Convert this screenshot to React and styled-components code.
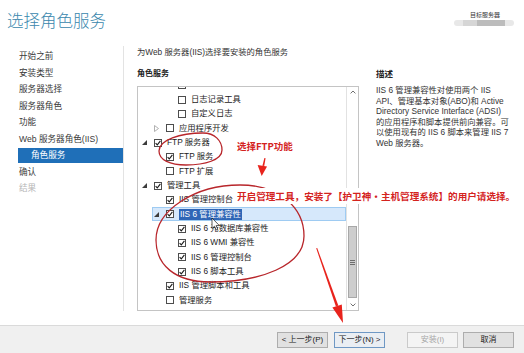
import React from 'react'
import styled, { createGlobalStyle } from 'styled-components'

const LATIN = `"Liberation Sans", "Noto Sans CJK SC", sans-serif`
const CJK = `"Noto Sans CJK SC", "Liberation Sans", sans-serif`

const GlobalStyle = createGlobalStyle`
    html, body { margin: 0; padding: 0; background: #fff; }
    body { font-family: ${LATIN}; }
`

const navItems = [
    { label: '开始之前' },
    { label: '安装类型' },
    { label: '服务器选择' },
    { label: '服务器角色' },
    { label: '功能' },
    { label: 'Web 服务器角色(IIS)' },
    { label: '角色服务', active: true },
    { label: '确认' },
    { label: '结果', muted: true },
]

const treeRows = [
    { level: 2, label: '' },
    { level: 2, label: '日志记录工具' },
    { level: 2, label: '自定义日志' },
    { level: 1, label: '应用程序开发', expander: 'closed' },
    { level: 0, label: 'FTP 服务器', expander: 'open', checked: true },
    { level: 1, label: 'FTP 服务', checked: true },
    { level: 1, label: 'FTP 扩展' },
    { level: 0, label: '管理工具', expander: 'open', checked: true },
    { level: 1, label: 'IIS 管理控制台', checked: true },
    { level: 1, label: 'IIS 6 管理兼容性', expander: 'open', checked: true, selected: true },
    { level: 2, label: 'IIS 6 元数据库兼容性', checked: true },
    { level: 2, label: 'IIS 6 WMI 兼容性', checked: true },
    { level: 2, label: 'IIS 6 管理控制台', checked: true },
    { level: 2, label: 'IIS 6 脚本工具', checked: true },
    { level: 1, label: 'IIS 管理脚本和工具', checked: true },
    { level: 1, label: '管理服务' },
]

const descLines = [
    'IIS 6 管理兼容性对使用两个 IIS',
    'API、管理基本对象(ABO)和 Active',
    'Directory Service Interface (ADSI)',
    '的应用程序和脚本提供前向兼容。可',
    '以使用现有的 IIS 6 脚本来管理 IIS 7',
    'Web 服务器。',
]

function Expander({ kind }) {
    if (kind === 'open') {
        return (
            <svg width="5" height="5" viewBox="0 0 5 5">
                <polygon points="5,0 5,5 0,5" fill="#3c3c3c" />
            </svg>
        )
    }
    if (kind === 'closed') {
        return (
            <svg width="5" height="7" viewBox="0 0 5 7">
                <polygon points="0.5,0.5 4.5,3.5 0.5,6.5" fill="none" stroke="#a8a8a8" strokeWidth="0.9" />
            </svg>
        )
    }
    return null
}

function Chevron({ up }) {
    return (
        <svg width="6" height="4" viewBox="0 0 6 4">
            <path d={up ? 'M0.6 3.4 L3 1 L5.4 3.4' : 'M0.6 0.6 L3 3 L5.4 0.6'} fill="none" stroke="#606060" strokeWidth="0.9" />
        </svg>
    )
}

export default function App() {
    return (
        <Window>
            <GlobalStyle />
            <Header>
                <Title>选择角色服务</Title>
                <Target>
                    <TargetLabel>目标服务器</TargetLabel>
                    <TargetBar>
                        <TargetChunk $w={14} $c="#d6d6d6" />
                        <TargetChunk $w={28} $c="#bcbcbc" />
                    </TargetBar>
                </Target>
            </Header>

            <Body>
                <Nav>
                    {navItems.map((item) => (
                        <NavItem key={item.label} $active={item.active} $muted={item.muted}>
                            {item.label}
                        </NavItem>
                    ))}
                </Nav>

                <Content>
                    <Subtitle>为Web 服务器(IIS)选择要安装的角色服务</Subtitle>
                    <Columns>
                        <Column>
                            <SectionTitle>角色服务</SectionTitle>
                            <TreeBox>
                                <TreeList>
                                    {treeRows.map((row, i) => (
                                        <TreeRow key={i} $level={row.level} $selected={row.selected}>
                                            <ExpanderSlot>
                                                <Expander kind={row.expander} />
                                            </ExpanderSlot>
                                            <Check>
                                                {row.checked && (
                                                    <svg width="6" height="6" viewBox="0 0 6 6">
                                                        <path d="M0.6 3.1 L2.3 4.9 L5.4 0.9" fill="none" stroke="#1c1c1c" strokeWidth="1.1" />
                                                    </svg>
                                                )}
                                            </Check>
                                            <RowLabel $selected={row.selected}>{row.label}</RowLabel>
                                        </TreeRow>
                                    ))}
                                </TreeList>
                                <ScrollBar>
                                    <ScrollButton><Chevron up /></ScrollButton>
                                    <Thumb>
                                        <Grip />
                                        <Grip />
                                        <Grip />
                                    </Thumb>
                                    <ScrollButton><Chevron /></ScrollButton>
                                </ScrollBar>
                            </TreeBox>
                        </Column>
                        <Column>
                            <SectionTitle $size={8.5}>描述</SectionTitle>
                            <Description>
                                {descLines.map((line) => (
                                    <DescLine key={line}>{line}</DescLine>
                                ))}
                            </Description>
                        </Column>
                    </Columns>
                </Content>
            </Body>

            <Footer>
                <Button>&lt; 上一步(P)</Button>
                <Button $primary $gap={6}>下一步(N) &gt;</Button>
                <Button disabled $gap={22}>安装(I)</Button>
                <Button $gap={5}>取消</Button>
            </Footer>

            <Overlay width="524" height="353" viewBox="0 0 524 353">
                <path
                    d="M159 151 C159 140 180 133 203 133 C215 133 222 141 222 150 C222 160 205 165 186 165 C170 165 159 160 159 151 Z"
                    fill="none"
                    stroke="#b8262b"
                    strokeWidth="1.3"
                />
                <path
                    d="M240 185 C280 185 304 208 304 236 C304 266 260 282 210 282 C175 282 156 265 156 240 C156 210 195 185 240 185 Z"
                    fill="none"
                    stroke="#b8262b"
                    strokeWidth="1.3"
                />
                <polygon points="264.4,158 265.6,158.2 264.2,166 262.4,165.8" fill="#e8231c" />
                <polygon points="257.6,165 267,166.6 261.7,176" fill="#e8231c" />
                <polygon points="316.2,248.3 317.2,248 338.3,305.6 335.9,306.4" fill="#e8231c" />
                <polygon points="341.8,304.4 332.4,307.6 343,323" fill="#e8231c" />
                <path
                    d="M212 218 L212 228.5 L214.5 226.2 L216.3 230 L217.9 229.3 L216.1 225.6 L219.4 225.6 Z"
                    fill="#fff"
                    stroke="#111"
                    strokeWidth="0.7"
                />
            </Overlay>
            <Note $top={140} $left={237} $size={9.5}>选择FTP功能</Note>
            <Note $top={188} $left={234} $size={9.6} $boxed>开启管理工具，安装了【护卫神•主机管理系统】的用户请选择。</Note>
        </Window>
    )
}

const Window = styled.div`
    position: relative;
    width: 524px;
    height: 353px;
    overflow: hidden;
    display: flex;
    flex-direction: column;
    background: #fff;
    font-family: ${LATIN};
    color: #333;
`

const Header = styled.header`
    height: 46px;
    flex: none;
    display: flex;
    justify-content: space-between;
    align-items: flex-start;
    padding: 0 10px 0 7px;
    box-sizing: border-box;
`

const Title = styled.h1`
    margin: 10px 0 0;
    font-family: ${CJK};
    font-weight: 300;
    font-size: 16.5px;
    line-height: 20px;
    color: #3a87ad;
`

const Target = styled.div`
    display: flex;
    flex-direction: column;
    align-items: flex-end;
    margin-top: 11px;
`

const TargetLabel = styled.div`
    font-family: ${CJK};
    font-size: 6px;
    line-height: 7px;
    color: #333;
    margin-right: 14px;
`

const TargetBar = styled.div`
    display: flex;
    width: 60px;
    height: 6px;
    margin-top: 2px;
    padding-left: 9px;
    box-sizing: border-box;
    border-radius: 3px;
    background: #e8e8e8;
`

const TargetChunk = styled.div`
    width: ${(p) => p.$w}px;
    background: ${(p) => p.$c};
`

const Body = styled.div`
    flex: 1;
    min-height: 0;
    display: flex;
    padding-bottom: 14px;
`

const Nav = styled.nav`
    width: 124px;
    flex: none;
    box-sizing: border-box;
    border-right: 1px solid #e3e3e3;
    padding-top: 2.4px;
    font-family: ${LATIN};
`

const NavItem = styled.div`
    height: ${(p) => (p.$active ? 15 : 16.5)}px;
    line-height: ${(p) => (p.$active ? 15 : 16.5)}px;
    margin: ${(p) => (p.$active ? '0.75px 0 0.75px 18px' : '0')};
    padding-left: ${(p) => (p.$active ? 13 : 19)}px;
    font-size: 8.6px;
    white-space: nowrap;
    background: ${(p) => (p.$active ? '#1f6fb8' : 'transparent')};
    color: ${(p) => (p.$active ? '#fff' : p.$muted ? '#b6b6b6' : '#3a3a3a')};
`

const Content = styled.main`
    flex: 1;
    min-width: 0;
    display: flex;
    flex-direction: column;
    padding-left: 13px;
`

const Subtitle = styled.div`
    font-size: 8.3px;
    line-height: 13px;
    color: #333;
    white-space: nowrap;
`

const Columns = styled.div`
    flex: 1;
    min-height: 0;
    margin-top: 8px;
    display: grid;
    grid-template-columns: 222px 1fr;
    column-gap: 17px;
`

const Column = styled.div`
    display: flex;
    flex-direction: column;
    min-height: 0;
`

const SectionTitle = styled.div`
    font-family: ${CJK};
    font-weight: 700;
    font-size: ${(p) => p.$size || 8}px;
    line-height: 12px;
    color: #222;
    margin-bottom: 7px;
`

const TreeBox = styled.div`
    flex: 1;
    min-height: 0;
    display: flex;
    overflow: hidden;
    border: 1px solid #c4c4c4;
    background: #fff;
`

const TreeList = styled.div`
    flex: 1;
    min-width: 0;
    margin-top: -9px;
`

const TreeRow = styled.div`
    height: 14.35px;
    display: flex;
    align-items: center;
    margin-left: ${(p) => 2 + p.$level * 12}px;
    background: ${(p) => (p.$selected ? '#d6e8fb' : 'transparent')};
    box-shadow: ${(p) => (p.$selected ? 'inset 0 0 0 1px #9ecbf2' : 'none')};
`

const ExpanderSlot = styled.div`
    width: 14px;
    flex: none;
    display: flex;
    align-items: center;
    padding-left: 2px;
    box-sizing: border-box;
`

const Check = styled.div`
    width: 8px;
    height: 8px;
    flex: none;
    box-sizing: border-box;
    border: 1px solid #4d4d4d;
    background: #fff;
    margin-right: 5px;
    display: flex;
    align-items: center;
    justify-content: center;
`

const RowLabel = styled.span`
    font-size: 8.3px;
    line-height: 11px;
    white-space: nowrap;
    padding: 0 ${(p) => (p.$selected ? 1 : 0)}px;
    color: ${(p) => (p.$selected ? '#fff' : '#1c1c1c')};
    background: ${(p) => (p.$selected ? '#2f66b6' : 'transparent')};
`

const ScrollBar = styled.div`
    width: 12px;
    flex: none;
    box-sizing: border-box;
    border-left: 1px solid #e2e2e2;
    display: flex;
    flex-direction: column;
`

const ScrollButton = styled.div`
    height: 10px;
    flex: none;
    display: flex;
    align-items: center;
    justify-content: center;
`

const Thumb = styled.div`
    height: 72px;
    margin: auto 1px 2px;
    box-sizing: border-box;
    background: #cdcdcd;
    border: 1px solid #a8a8a8;
    display: flex;
    flex-direction: column;
    align-items: center;
    justify-content: center;
    gap: 1px;
`

const Grip = styled.div`
    width: 5px;
    height: 1px;
    background: #6e6e6e;
`

const Description = styled.div`
    margin-top: -1px;
    font-size: 8.3px;
    line-height: 10.5px;
    color: #333;
`

const DescLine = styled.div`
    white-space: nowrap;
`

const Footer = styled.footer`
    height: 28px;
    flex: none;
    box-sizing: border-box;
    border-top: 1px solid #dadada;
    background: #f0f0f0;
    display: flex;
    align-items: center;
    justify-content: flex-end;
    padding-right: 10px;
`

const Button = styled.button`
    width: 51px;
    height: 16px;
    margin: 0 0 0 ${(p) => p.$gap || 0}px;
    padding: 0;
    box-sizing: border-box;
    font-family: ${LATIN};
    font-size: 8px;
    line-height: 14px;
    color: #222;
    border: 1px solid ${(p) => (p.$primary ? '#6f98c4' : '#adadad')};
    background: ${(p) => (p.$primary ? '#eaeef3' : '#e1e1e1')};

    &:disabled {
        color: #a6a6a6;
        border-color: #cacaca;
        background: #f4f4f4;
    }
`

const Overlay = styled.svg`
    position: absolute;
    left: 0;
    top: 0;
    pointer-events: none;
`

const Note = styled.div`
    position: absolute;
    top: ${(p) => p.$top}px;
    left: ${(p) => p.$left}px;
    padding: 0 ${(p) => (p.$boxed ? 3 : 0)}px;
    background: ${(p) => (p.$boxed ? '#fff' : 'transparent')};
    font-family: ${CJK};
    font-weight: 700;
    font-size: ${(p) => p.$size}px;
    line-height: ${(p) => (p.$boxed ? 16 : 12)}px;
    color: #d4231e;
    white-space: nowrap;
`
